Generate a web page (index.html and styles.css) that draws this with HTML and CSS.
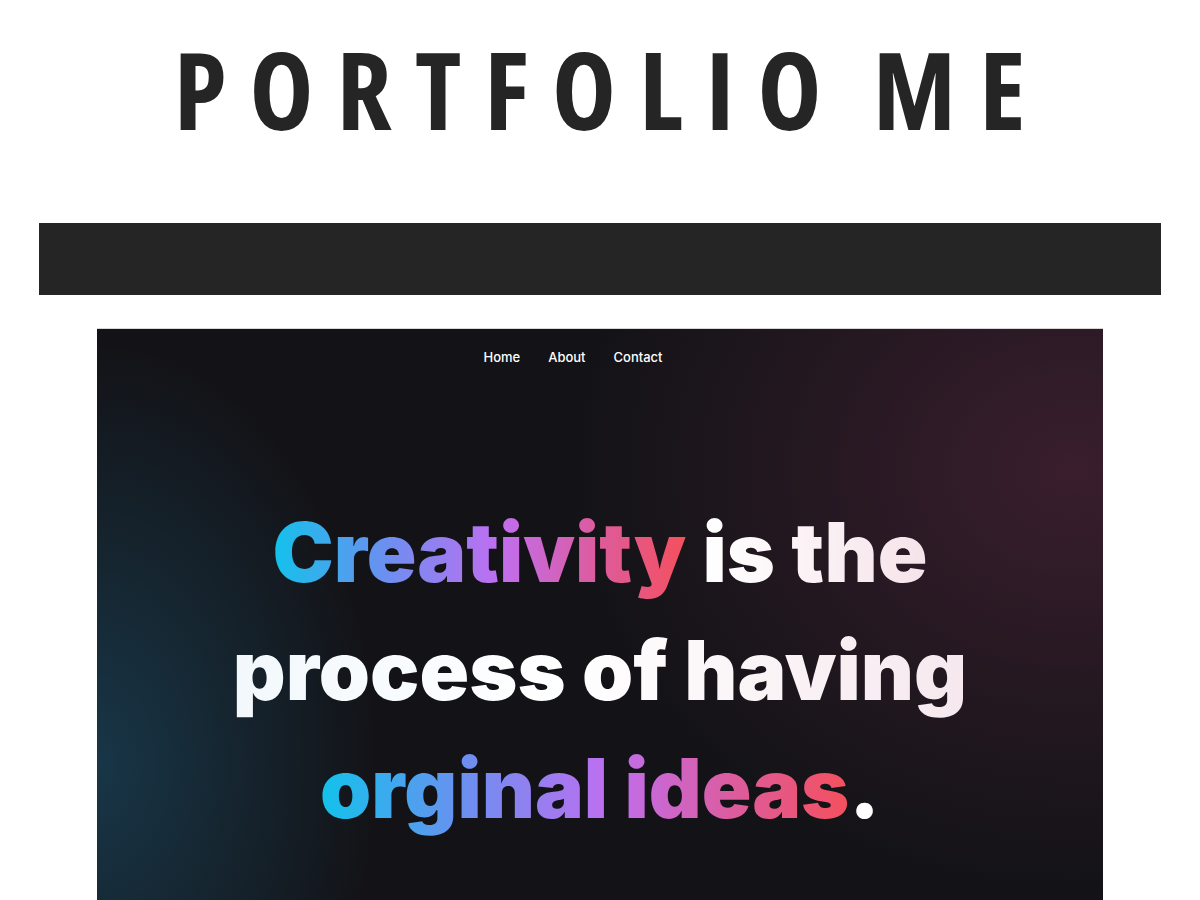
FILE: index.html
```html
<!DOCTYPE html>
<html lang="en">
<head>
<meta charset="utf-8">
<title>Portfolio Me</title>
<link rel="stylesheet" href="styles.css">
</head>
<body>
<header class="site-header">
  <h1 class="site-title">PORTFOLIO ME</h1>
</header>
<div class="bar"></div>
<section class="hero">
  <nav class="hero-nav">
    <a href="#" class="nav-link">Home</a>
    <a href="#" class="nav-link">About</a>
    <a href="#" class="nav-link">Contact</a>
  </nav>
  <h2 class="hero-title">
    <span class="line"><span class="grad">Creativity</span> <span class="light">is the</span></span>
    <span class="line"><span class="light light-wide">process of having</span></span>
    <span class="line"><span class="grad">orginal ideas</span><span class="dot">.</span></span>
  </h2>
</section>
</body>
</html>
```
FILE: styles.css
```css
* { box-sizing: border-box; }
html, body { margin: 0; padding: 0; background: #ffffff; }
body { font-family: "Inter", "Liberation Sans", sans-serif; overflow: hidden; height: 900px; }

.site-header {
  display: flex;
  justify-content: center;
  padding-top: 37px;
  height: 223px;
}
.site-title {
  margin: 0;
  font-family: "Open Sans", sans-serif;
  font-stretch: 75%;
  font-weight: 700;
  font-size: 108px;
  line-height: 104px;
  letter-spacing: 23px;
  word-spacing: -14px;
  color: #252525;
  padding-left: 22px;
}

.bar {
  margin: 0 39px;
  height: 72px;
  background: #252525;
}

.hero {
  margin: 33px 97px 0;
  height: 640px;
  border-top: 1px solid #d6d6d6;
  background:
    radial-gradient(ellipse 280px 420px at 0% 68%, rgba(24, 56, 74, 0.95), rgba(24, 56, 74, 0) 100%),
    radial-gradient(ellipse 500px 420px at 97% 22%, rgba(58, 30, 46, 1), rgba(52, 28, 42, 0.5) 55%, rgba(52, 28, 42, 0) 100%),
    #131317;
  display: flex;
  flex-direction: column;
  align-items: center;
}

.hero-nav {
  display: flex;
  gap: 28px;
  padding-top: 19px;
  margin-right: 54px;
}
.nav-link {
  color: #ffffff;
  text-decoration: none;
  font-family: "Inter", sans-serif;
  font-weight: 500;
  font-size: 13px;
  line-height: 18px;
}

.hero-title {
  margin: 128px 0 0;
  font-family: "Inter", sans-serif;
  font-weight: 900;
  font-size: 82px;
  line-height: 118px;
  letter-spacing: 0;
  text-align: center;
  display: flex;
  flex-direction: column;
  align-items: center;
}
.line { display: block; white-space: nowrap; }
.grad {
  background: linear-gradient(90deg, #12c2eb 0%, #6e8ef0 28%, #c06ef0 55%, #dc5c9e 78%, #f5505d 100%);
  -webkit-background-clip: text;
  background-clip: text;
  color: transparent;
}
.light {
  background: linear-gradient(90deg, #ffffff 0%, #f6e3ea 100%);
  -webkit-background-clip: text;
  background-clip: text;
  color: transparent;
}
.light-wide {
  background: linear-gradient(90deg, #f2f8fc 0%, #ffffff 45%, #f6e8ee 100%);
  -webkit-background-clip: text;
  background-clip: text;
}
.dot { color: #ffffff; }
```
